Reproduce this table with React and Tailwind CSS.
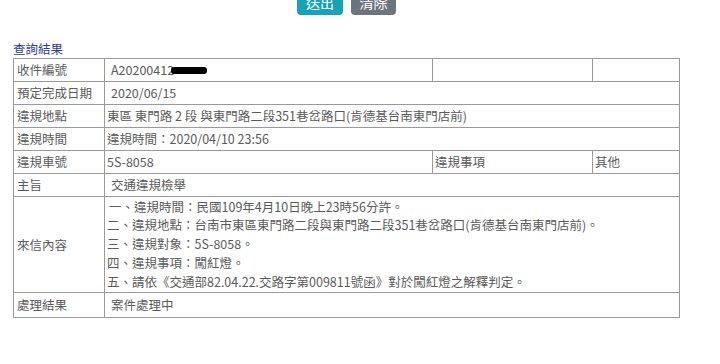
import React from 'react';

const font = { fontFamily: '"Noto Sans CJK TC", "Noto Sans", sans-serif' };

const Label = ({ children, className = '' }) => (
  <td className={`border border-[#9a9a9a] pl-[3px] align-middle ${className}`}>{children}</td>
);

const Value = ({ children, colSpan, indent = false }) => (
  <td colSpan={colSpan} className={`border border-[#9a9a9a] align-middle ${indent ? 'pl-[6px]' : 'pl-[2px]'}`}>
    {children}
  </td>
);

const contentLines = [
  '一、違規時間：民國109年4月10日晚上23時56分許。',
  '二、違規地點：台南市東區東門路二段與東門路二段351巷岔路口(肯德基台南東門店前)。',
  '三、違規對象：5S-8058。',
  '四、違規事項：闖紅燈。',
  '五、請依《交通部82.04.22.交路字第009811號函》對於闖紅燈之解釋判定。',
];

export default function App() {
  return (
    <div className="w-[720px] h-[364px] bg-white overflow-hidden text-[12.5px] text-[#5a5a5a]" style={font}>
      {/* buttons, cut at the top edge */}
      <div className="flex gap-2 pl-[297px] -mt-[17px]">
        <button className="w-[46px] h-[32px] rounded-[4px] bg-[#17a2b8] text-white text-[14px] leading-none pt-[6px]">
          送出
        </button>
        <button className="w-[45px] h-[32px] rounded-[4px] bg-[#6c757d] text-white text-[14px] leading-none pt-[6px]">
          清除
        </button>
      </div>

      <div className="pl-[13px] mt-[25px]">
        <div className="text-[#2b3a9e] text-[12.5px] leading-[18px]">查詢結果</div>
        <table className="table-fixed border-collapse border border-[#6b6b6b] w-[666px] leading-[18px]">
          <colgroup>
            <col className="w-[91px]" />
            <col className="w-[328px]" />
            <col className="w-[160px]" />
            <col className="w-[87px]" />
          </colgroup>
          <tbody>
            <tr className="h-[23px]">
              <Label>收件編號</Label>
              <Value indent>
                <span className="inline-flex items-center">
                  A20200412
                  <span className="inline-block w-[36px] h-[7px] bg-black rounded-[3px] -ml-[3px]" />
                </span>
              </Value>
              <Value />
              <Value />
            </tr>
            <tr className="h-[23px]">
              <Label>預定完成日期</Label>
              <Value colSpan={3} indent>2020/06/15</Value>
            </tr>
            <tr className="h-[23px]">
              <Label>違規地點</Label>
              <Value colSpan={3}>東區 東門路 2 段 與東門路二段351巷岔路口(肯德基台南東門店前)</Value>
            </tr>
            <tr className="h-[23px]">
              <Label>違規時間</Label>
              <Value colSpan={3}>違規時間：2020/04/10 23:56</Value>
            </tr>
            <tr className="h-[23px]">
              <Label>違規車號</Label>
              <Value>5S-8058</Value>
              <Value>違規事項</Value>
              <Value>其他</Value>
            </tr>
            <tr className="h-[23px]">
              <Label>主旨</Label>
              <Value colSpan={3} indent>交通違規檢舉</Value>
            </tr>
            <tr className="h-[96px]">
              <Label>來信內容</Label>
              <Value colSpan={3}>
                <div className="flex flex-col leading-[18.8px]">
                  {contentLines.map((line, i) => (
                    <div key={i} className={i === 0 ? 'pl-[2px]' : ''}>{line}</div>
                  ))}
                </div>
              </Value>
            </tr>
            <tr className="h-[25px]">
              <Label>處理結果</Label>
              <Value colSpan={3} indent>案件處理中</Value>
            </tr>
          </tbody>
        </table>
      </div>
    </div>
  );
}
